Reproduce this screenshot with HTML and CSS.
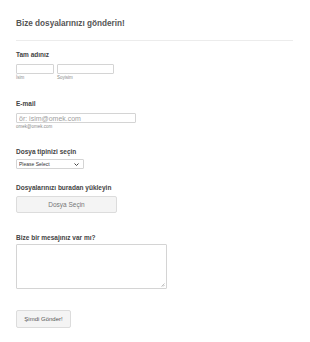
FILE: index.html
```html
<!DOCTYPE html>
<html>
  <head>
    <meta charset="utf-8">
    <link rel="stylesheet" href="styles.css">
  </head>
  <body>
    <form class="form">
      <h2 class="form-title">Bize dosyalarınızı gönderin!</h2>
      <hr class="divider">

      <div class="field field-name">
        <label class="label">Tam adınız</label>
        <div class="name-row">
          <div class="name-part">
            <input type="text" class="input input-first">
            <span class="sublabel">İsim</span>
          </div>
          <div class="name-part">
            <input type="text" class="input input-last">
            <span class="sublabel">Soyisim</span>
          </div>
        </div>
      </div>

      <div class="field field-email">
        <label class="label">E-mail</label>
        <input type="email" class="input input-email" placeholder="ör: isim@omek.com">
        <span class="sublabel">omek@omek.com</span>
      </div>

      <div class="field field-type">
        <label class="label">Dosya tipinizi seçin</label>
        <div class="select-wrap">
          <select class="select">
            <option>Please Select</option>
          </select>
          <svg class="select-arrow" width="5" height="3" viewBox="0 0 5 3">
            <path d="M0.5 0.5 L2.5 2.5 L4.5 0.5" fill="none" stroke="#444" stroke-width="1"/>
          </svg>
        </div>
      </div>

      <div class="field field-upload">
        <label class="label">Dosyalarınızı buradan yükleyin</label>
        <button type="button" class="btn btn-upload">Dosya Seçin</button>
      </div>

      <div class="field field-message">
        <label class="label">Bize bir mesajınız var mı?</label>
        <div class="textarea-wrap">
          <textarea class="textarea"></textarea>
          <svg class="grip" width="4" height="4" viewBox="0 0 4 4">
            <path d="M0.5 3.5 L3.5 0.5 M2 3.5 L3.5 2" stroke="#999" stroke-width="0.6"/>
          </svg>
        </div>
      </div>

      <div class="field field-submit">
        <button type="button" class="btn btn-submit">Şimdi Gönder!</button>
      </div>
    </form>
  </body>
</html>
```

FILE: styles.css
```css
html, body {
  margin: 0;
  background: #fff;
  font-family: "Liberation Sans", Arial, sans-serif;
}

.form {
  padding: 18px 17px 0 16px;
}

.form-title {
  margin: 0;
  font-size: 8.2px;
  line-height: 12px;
  font-weight: bold;
  color: #555;
}

.divider {
  margin: 10px 0 0;
  border: 0;
  border-top: 1px solid #ececec;
}

.field {
  display: flex;
  flex-direction: column;
  align-items: flex-start;
}

.label {
  font-size: 6.5px;
  line-height: 9px;
  font-weight: bold;
  color: #444;
  margin-bottom: 5px;
}

.sublabel {
  font-size: 4.5px;
  line-height: 6px;
  color: #8a8a8a;
  margin-top: 1px;
}

.input {
  box-sizing: border-box;
  height: 10px;
  margin: 0;
  padding: 0 2px;
  border: 1px solid #d4d4d4;
  border-radius: 1px;
  font-family: inherit;
  font-size: 7px;
  color: #555;
  outline: none;
}
  .input::placeholder {
    color: #a0a0a0;
  }

.field-name {
  margin-top: 9px;
}

.name-row {
  display: flex;
  gap: 3px;
}

.name-part {
  display: flex;
  flex-direction: column;
}

.input-first { width: 38px; }
.input-last { width: 57px; }

.field-email {
  margin-top: 18px;
}

.input-email {
  width: 120px;
}

.field-type {
  margin-top: 17px;
}

.field-type .label {
  margin-bottom: 3px;
}

.select-wrap {
  position: relative;
  display: flex;
}

.select {
  box-sizing: border-box;
  width: 68px;
  height: 10px;
  padding: 0 0 0 2px;
  border: 1px solid #d4d4d4;
  border-radius: 1px;
  font-family: inherit;
  font-size: 5px;
  color: #333;
  background: #fff;
  -webkit-appearance: none;
  appearance: none;
  outline: none;
}

.select-arrow {
  position: absolute;
  right: 5px;
  top: 4px;
  pointer-events: none;
}

.field-upload {
  margin-top: 14px;
}

.field-upload .label {
  margin-bottom: 4px;
}

.btn {
  box-sizing: border-box;
  margin: 0;
  border: 1px solid #dcdcdc;
  border-radius: 2px;
  background: #f4f4f4;
  font-family: inherit;
  color: #777;
  cursor: pointer;
}

.btn-upload {
  width: 101px;
  height: 17px;
  font-size: 6.5px;
}

.field-message {
  margin-top: 20px;
}

.field-message .label {
  margin-bottom: 2px;
}

.textarea-wrap {
  position: relative;
  display: flex;
}

.textarea {
  box-sizing: border-box;
  width: 151px;
  height: 45px;
  margin: 0;
  border: 1px solid #d4d4d4;
  border-radius: 1px;
  resize: none;
  outline: none;
}

.grip {
  position: absolute;
  right: 2px;
  bottom: 2px;
}

.field-submit {
  margin-top: 21px;
}

.btn-submit {
  width: 55px;
  height: 18px;
  font-size: 6px;
  color: #555;
}
```
